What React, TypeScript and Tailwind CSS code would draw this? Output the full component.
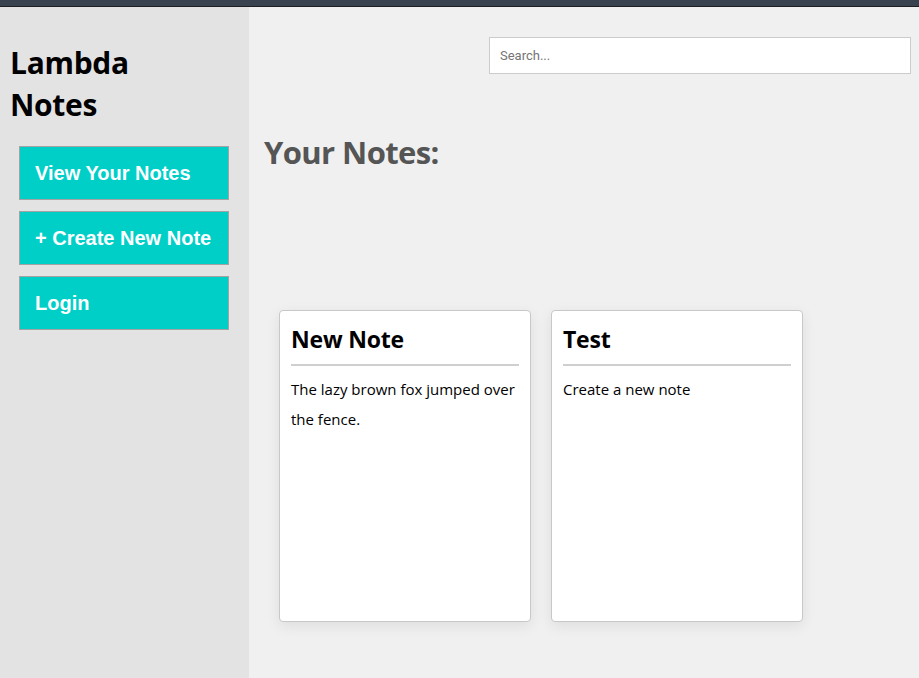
import React from "react";

const notes = [
  { title: "New Note", body: "The lazy brown fox jumped over the fence." },
  { title: "Test", body: "Create a new note" },
];

export default function App() {
  return (
    <div className="w-[919px] h-[678px] overflow-hidden flex flex-col bg-[#f0f0f0]" style={{ fontFamily: '"Open Sans", "Noto Sans", sans-serif' }}>
      <div className="h-[6px] bg-[#38434f] border-b border-[#1d1f22] box-content shrink-0" />
      <div className="flex flex-1 min-h-0">
        <aside className="w-[249px] shrink-0 bg-[#e3e3e3] flex flex-col">
          <h1 className="ml-[10px] mt-[35px] text-[30px] leading-[42px] font-bold text-black tracking-[-0.3px]">
            Lambda
            <br />
            Notes
          </h1>
          <nav className="mt-[20px] ml-[19px] flex flex-col gap-[11px]" style={{ fontFamily: '"Liberation Sans", Arial, sans-serif' }}>
            {["View Your Notes", "+ Create New Note", "Login"].map((t) => (
              <div key={t} className="w-[210px] h-[54px] bg-[#00cfc8] border border-[#a3a3a3] flex items-center pl-[15px] text-white font-bold text-[20px]">
                {t}
              </div>
            ))}
          </nav>
        </aside>
        <main className="flex-1 flex flex-col">
          <div className="flex justify-end pr-[8px] pt-[30px]">
            <div className="w-[422px] h-[37px] bg-white border border-[#cccccc] flex items-center pl-[10px]">
              <span className="text-[13px] text-[#757575]" style={{ fontFamily: 'Roboto, sans-serif' }}>Search...</span>
            </div>
          </div>
          <h2 className="ml-[15px] mt-[58px] text-[31px] leading-[40px] font-bold text-[#555555] tracking-[-0.6px]">Your Notes:</h2>
          <div className="ml-[30px] mt-[138px] flex gap-[20px]">
            {notes.map((n) => (
              <div key={n.title} className="w-[252px] h-[312px] bg-white border border-[#c8c8c8] rounded-[4px] shadow-[0_4px_14px_rgba(0,0,0,0.08)] px-[11px] pt-[12px]">
                <div className="text-[23px] leading-[32px] font-bold text-black tracking-[-0.2px]">{n.title}</div>
                <div className="mt-[9px] h-[2px] bg-[#cfcfcf]" />
                <p className="mt-[8px] text-[15px] leading-[30px] text-black">{n.body}</p>
              </div>
            ))}
          </div>
        </main>
      </div>
    </div>
  );
}
